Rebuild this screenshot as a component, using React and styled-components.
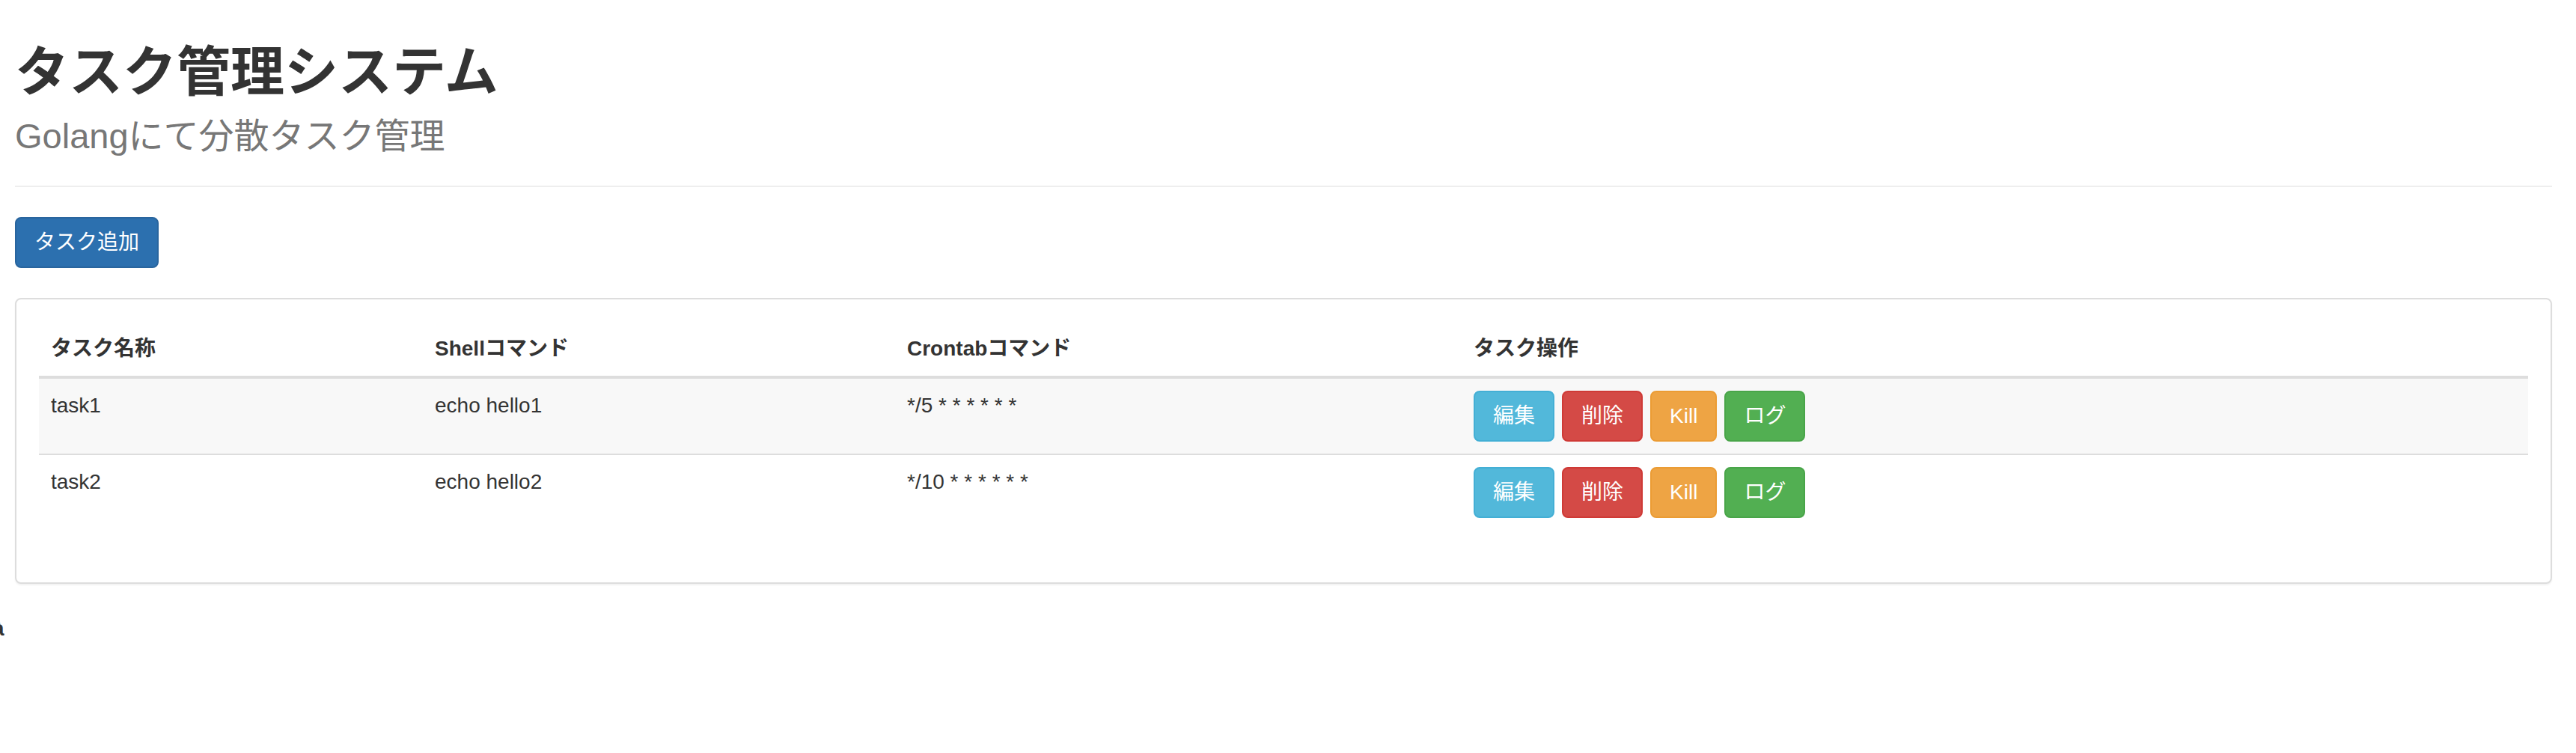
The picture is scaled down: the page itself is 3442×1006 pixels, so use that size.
import React from "react";
import styled, { createGlobalStyle } from "styled-components";

const GlobalStyle = createGlobalStyle`
  * {
    box-sizing: border-box;
  }
  body {
    margin: 0;
    background-color: #ffffff;
    color: #333333;
    font-family: "Liberation Sans", "Noto Sans CJK JP", sans-serif;
    font-size: 28px;
    line-height: 40px;
    overflow: hidden;
  }
`;

const Page = styled.div`
  padding: 0 32px 0 20px;
`;

const Header = styled.div`
  padding-bottom: 40px;
  border-bottom: 2px solid #eeeeee;
`;

const Title = styled.h1`
  margin: 56px 0 0 0;
  font-size: 72px;
  line-height: 80px;
  font-weight: bold;
  color: #333333;
`;

const Subtitle = styled.div`
  margin-top: 20px;
  font-size: 47px;
  line-height: 52px;
  color: #777777;
`;

const Toolbar = styled.div`
  margin-top: 40px;
`;

const Button = styled.button`
  display: inline-block;
  padding: 12px 24px;
  font-family: inherit;
  font-size: 28px;
  line-height: 40px;
  color: #ffffff;
  border: 2px solid ${(p) => p.$border};
  background-color: ${(p) => p.$bg};
  border-radius: 8px;
  cursor: pointer;
`;

const Panel = styled.div`
  margin-top: 40px;
  border: 2px solid #dddddd;
  border-radius: 8px;
  box-shadow: 0 2px 2px rgba(0, 0, 0, 0.05);
  background-color: #ffffff;
`;

const PanelBody = styled.div`
  padding: 30px;
`;

const Table = styled.table`
  width: 100%;
  margin-bottom: 40px;
  border-collapse: collapse;
  border-spacing: 0;
  table-layout: fixed;
`;

const HeadCell = styled.th`
  width: ${(p) => p.$width || "auto"};
  padding: 16px;
  text-align: left;
  vertical-align: bottom;
  font-weight: bold;
  border-bottom: 4px solid #dddddd;
`;

const Row = styled.tr`
  &:nth-of-type(odd) {
    background-color: #f8f8f8;
  }
`;

const Cell = styled.td`
  padding: 16px;
  vertical-align: top;
  border-top: 2px solid #dddddd;
`;

const Actions = styled.div`
  display: flex;
  gap: 10px;
`;

const Stray = styled.div`
  margin-top: 40px;
  margin-left: -30px;
  font-weight: bold;
`;

const variants = {
  primary: { bg: "#2c70af", border: "#29659e" },
  info: { bg: "#52b8da", border: "#43afd5" },
  danger: { bg: "#d44a46", border: "#cf3a36" },
  warning: { bg: "#eea444", border: "#eb9c34" },
  success: { bg: "#52af52", border: "#49a549" },
};

const Btn = ({ kind, children }) => (
  <Button $bg={variants[kind].bg} $border={variants[kind].border}>
    {children}
  </Button>
);

const tasks = [
  { name: "task1", command: "echo hello1", cron: "*/5 * * * * * *" },
  { name: "task2", command: "echo hello2", cron: "*/10 * * * * * *" },
];

const App = () => {
  return (
    <>
      <GlobalStyle />
      <Page>
        <Header>
          <Title>タスク管理システム</Title>
          <Subtitle>Golangにて分散タスク管理</Subtitle>
        </Header>
        <Toolbar>
          <Btn kind="primary">タスク追加</Btn>
        </Toolbar>
        <Panel>
          <PanelBody>
            <Table>
              <thead>
                <tr>
                  <HeadCell $width="513px">タスク名称</HeadCell>
                  <HeadCell $width="631px">Shellコマンド</HeadCell>
                  <HeadCell $width="757px">Crontabコマンド</HeadCell>
                  <HeadCell>タスク操作</HeadCell>
                </tr>
              </thead>
              <tbody>
                {tasks.map((t) => (
                  <Row key={t.name}>
                    <Cell>{t.name}</Cell>
                    <Cell>{t.command}</Cell>
                    <Cell>{t.cron}</Cell>
                    <Cell>
                      <Actions>
                        <Btn kind="info">編集</Btn>
                        <Btn kind="danger">削除</Btn>
                        <Btn kind="warning">Kill</Btn>
                        <Btn kind="success">ログ</Btn>
                      </Actions>
                    </Cell>
                  </Row>
                ))}
              </tbody>
            </Table>
          </PanelBody>
        </Panel>
        <Stray>à</Stray>
      </Page>
    </>
  );
};

export default App;
